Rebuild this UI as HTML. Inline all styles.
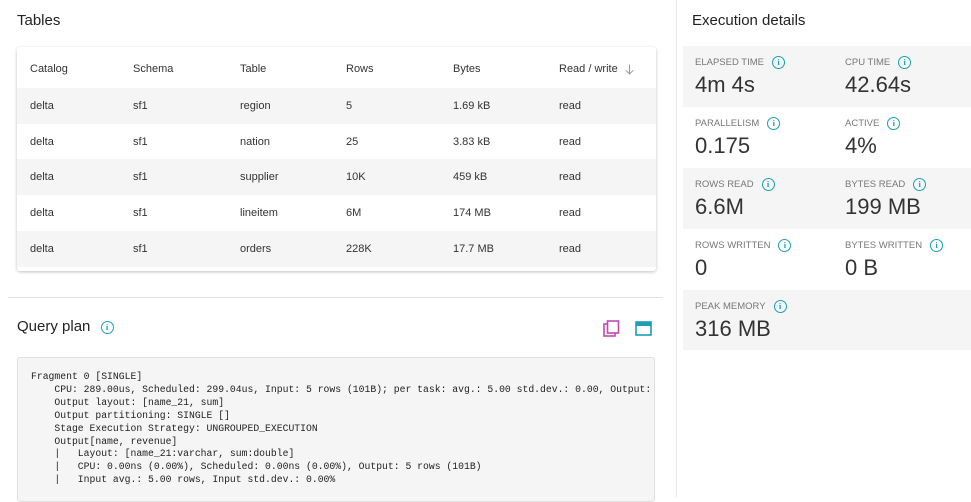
<!DOCTYPE html>
<html><head><style>
*{box-sizing:border-box;margin:0;padding:0}
body{width:971px;height:497px;overflow:hidden;background:#fff;font-family:"Liberation Sans",sans-serif;color:#222;position:relative}
.abs{position:absolute}
h2{font-weight:normal;font-size:15px;color:#222}
.card{left:17px;top:47px;width:639px;height:224px;background:#fff;box-shadow:0 1px 3px rgba(0,0,0,.25);border-radius:3px}
.row{position:absolute;left:0;width:639px;height:36px;font-size:11px;color:#333}
.row span{position:absolute;top:12px}
.g{background:#f5f5f5}
.m{position:absolute;width:144px;height:61px}
.lbl{position:absolute;top:10px;font-size:9.5px;color:#777;display:flex;align-items:center;gap:8px}
.val{position:absolute;top:26px;font-size:22px;color:#333}
.i{display:inline-block;width:13px;height:13px;border:1.4px solid #1a9fb5;border-radius:50%;color:#1a9fb5;font-size:8.5px;font-weight:bold;text-align:center;line-height:10.5px;font-family:"Liberation Serif",serif}
pre{font-family:"Liberation Mono",monospace;font-size:9.75px;line-height:12.9px;color:#222}
</style></head><body>
<h2 class="abs" style="left:17px;top:12px">Tables</h2>
<div class="abs card">
 <div class="row" style="top:4px"><span style="left:13px">Catalog</span><span style="left:116px">Schema</span><span style="left:223px">Table</span><span style="left:329px">Rows</span><span style="left:436px">Bytes</span><span style="left:542px">Read / write</span>
 <svg style="position:absolute;left:608px;top:13px" width="9" height="11" viewBox="0 0 9 11"><path d="M4.5 0.5V10M0.8 6.3L4.5 10L8.2 6.3" fill="none" stroke="#999" stroke-width="1"/></svg></div>
 <div class="row g" style="top:41px"><span style="left:13px">delta</span><span style="left:116px">sf1</span><span style="left:223px">region</span><span style="left:329px">5</span><span style="left:436px">1.69 kB</span><span style="left:542px">read</span></div>
 <div class="row" style="top:77px"><span style="left:13px">delta</span><span style="left:116px">sf1</span><span style="left:223px">nation</span><span style="left:329px">25</span><span style="left:436px">3.83 kB</span><span style="left:542px">read</span></div>
 <div class="row g" style="top:112px"><span style="left:13px">delta</span><span style="left:116px">sf1</span><span style="left:223px">supplier</span><span style="left:329px">10K</span><span style="left:436px">459 kB</span><span style="left:542px">read</span></div>
 <div class="row" style="top:148px"><span style="left:13px">delta</span><span style="left:116px">sf1</span><span style="left:223px">lineitem</span><span style="left:329px">6M</span><span style="left:436px">174 MB</span><span style="left:542px">read</span></div>
 <div class="row g" style="top:184px"><span style="left:13px">delta</span><span style="left:116px">sf1</span><span style="left:223px">orders</span><span style="left:329px">228K</span><span style="left:436px">17.7 MB</span><span style="left:542px">read</span></div>
</div>
<div class="abs" style="left:8px;top:297px;width:655px;height:1px;background:#e2e2e2"></div>
<div class="abs" style="left:676px;top:0;width:1px;height:497px;background:#e6e6e6"></div>
<h2 class="abs" style="left:17px;top:318px">Query plan <span class="i" style="vertical-align:1px;margin-left:6px">i</span></h2>
<svg class="abs" style="left:603px;top:320px" width="18" height="18" viewBox="0 0 18 18"><rect x="1" y="4" width="11" height="12" fill="none" stroke="#c24aae" stroke-width="1.6"/><rect x="4.5" y="1" width="11" height="12" fill="#fff" stroke="#c24aae" stroke-width="1.6"/></svg>
<svg class="abs" style="left:635px;top:321px" width="18" height="16" viewBox="0 0 18 16"><rect x="1" y="1" width="15" height="13" fill="none" stroke="#1a9fb5" stroke-width="1.6"/><rect x="1" y="1" width="15" height="4" fill="#1a9fb5"/></svg>
<div class="abs" style="left:17px;top:357px;width:638px;height:145px;background:#f5f5f5;border:1px solid #e0e0e0;border-radius:3px;overflow:hidden">
<pre style="margin:13px 0 0 13px">Fragment 0 [SINGLE]
    CPU: 289.00us, Scheduled: 299.04us, Input: 5 rows (101B); per task: avg.: 5.00 std.dev.: 0.00, Output:
    Output layout: [name_21, sum]
    Output partitioning: SINGLE []
    Stage Execution Strategy: UNGROUPED_EXECUTION
    Output[name, revenue]
    |   Layout: [name_21:varchar, sum:double]
    |   CPU: 0.00ns (0.00%), Scheduled: 0.00ns (0.00%), Output: 5 rows (101B)
    |   Input avg.: 5.00 rows, Input std.dev.: 0.00%</pre>
</div>
<h2 class="abs" style="left:692px;top:12px">Execution details</h2>
<div class="abs g" style="left:683px;top:46px;width:288px;height:61px"></div>
<div class="abs g" style="left:683px;top:168px;width:288px;height:61px"></div>
<div class="abs g" style="left:683px;top:290px;width:288px;height:60px"></div>
<div class="m" style="left:695px;top:46px"><div class="lbl">ELAPSED TIME <span class="i">i</span></div><div class="val">4m 4s</div></div>
<div class="m" style="left:845px;top:46px"><div class="lbl">CPU TIME <span class="i">i</span></div><div class="val">42.64s</div></div>
<div class="m" style="left:695px;top:107px"><div class="lbl">PARALLELISM <span class="i">i</span></div><div class="val">0.175</div></div>
<div class="m" style="left:845px;top:107px"><div class="lbl">ACTIVE <span class="i">i</span></div><div class="val">4%</div></div>
<div class="m" style="left:695px;top:168px"><div class="lbl">ROWS READ <span class="i">i</span></div><div class="val">6.6M</div></div>
<div class="m" style="left:845px;top:168px"><div class="lbl">BYTES READ <span class="i">i</span></div><div class="val">199 MB</div></div>
<div class="m" style="left:695px;top:229px"><div class="lbl">ROWS WRITTEN <span class="i">i</span></div><div class="val">0</div></div>
<div class="m" style="left:845px;top:229px"><div class="lbl">BYTES WRITTEN <span class="i">i</span></div><div class="val">0 B</div></div>
<div class="m" style="left:695px;top:290px"><div class="lbl">PEAK MEMORY <span class="i">i</span></div><div class="val">316 MB</div></div>
</body></html>
